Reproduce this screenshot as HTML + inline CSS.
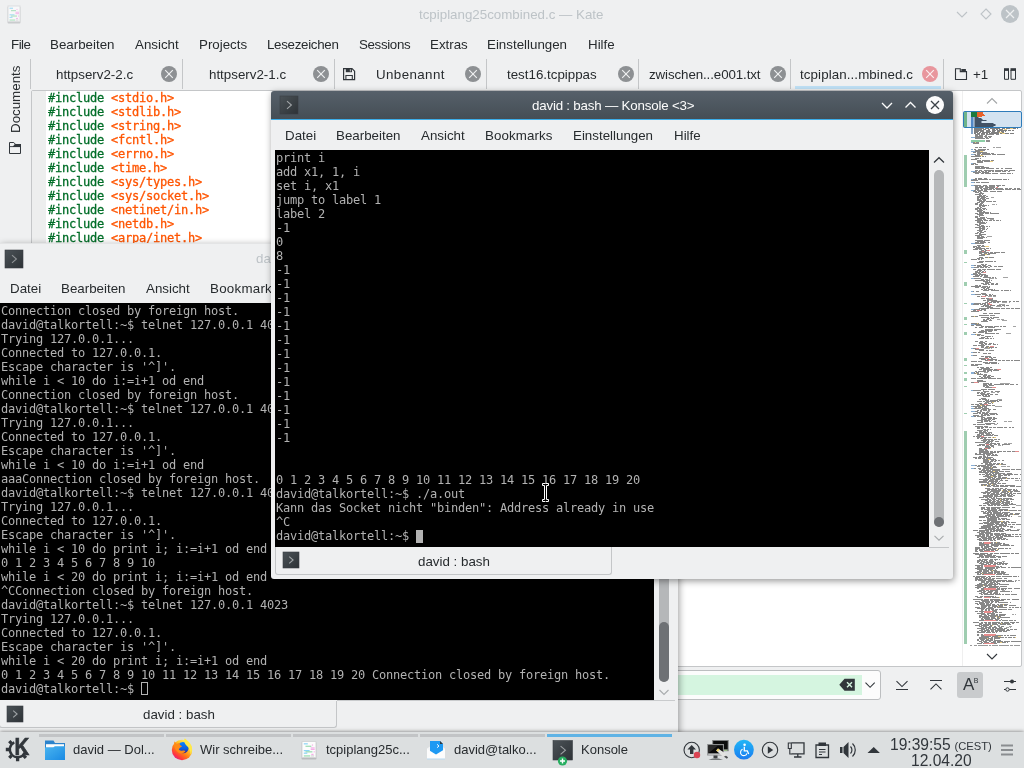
<!DOCTYPE html>
<html lang="de">
<head>
<meta charset="utf-8">
<title>tcpiplang25combined.c — Kate</title>
<style>
*{box-sizing:border-box;margin:0;padding:0}
html,body{width:1024px;height:768px;overflow:hidden;background:#eff0f1}
body{position:relative;font-family:"Liberation Sans",sans-serif;font-size:13.33px;color:#272b2e}
.abs{position:absolute}
.t,.mono{will-change:transform}
.t{position:absolute;white-space:nowrap;line-height:16px;height:16px}
.mono{font-family:"DejaVu Sans Mono","Liberation Mono",monospace;font-size:12px;letter-spacing:-0.2246px;line-height:14px}
.mono div{white-space:pre;height:14px;overflow:hidden}
.term{position:absolute;background:#000;color:#b2b2b2;overflow:hidden}
.code{position:absolute;color:#006e28;overflow:hidden;-webkit-text-stroke:.3px}
.code b{font-weight:normal;color:#ff5500}
svg{position:absolute;left:0;top:0;overflow:visible}
.tabsep{position:absolute;top:59px;width:1px;height:30px;background:#c4c6c8}
.win{position:absolute;background:#eff0f1}
#k1{left:0;top:243px;width:678px;height:492px;box-shadow:1px 2px 7px rgba(0,0,0,.4);border-top:1px solid #e3e4e5}
#k3{left:271px;top:91px;width:682px;height:488px;box-shadow:1px 2px 7px rgba(0,0,0,.42);border-radius:3px}
#k3 .tb{left:0;top:0;width:682px;height:29px;border-radius:3px 3px 0 0;background:linear-gradient(#56606a,#454e55);border-bottom:1px solid #3daee9}
#k3 .tb .t{color:#fcfcfc}
#panel{left:0;top:732px;width:1024px;height:36px;background:#dcdfe0;box-shadow:0 0 4px rgba(0,0,0,.55)}
.task{position:absolute;top:2px;height:3px;background:#c2c4c6}
.task.act{background:#60b3e5}
.pt{font-size:13px}

</style>
</head>
<body>
<div class="t" style="left:419px;top:7px;color:#bdc3c7">tcpiplang25combined.c — Kate</div>
<div class="t" style="left:11px;top:37px;letter-spacing:-0.5px">File</div>
<div class="t" style="left:50px;top:37px;letter-spacing:0px">Bearbeiten</div>
<div class="t" style="left:135px;top:37px;letter-spacing:0px">Ansicht</div>
<div class="t" style="left:199px;top:37px;letter-spacing:0px">Projects</div>
<div class="t" style="left:267px;top:37px;letter-spacing:-0.3px">Lesezeichen</div>
<div class="t" style="left:359px;top:37px;letter-spacing:-0.35px">Sessions</div>
<div class="t" style="left:430px;top:37px;letter-spacing:0px">Extras</div>
<div class="t" style="left:487px;top:37px;letter-spacing:0px">Einstellungen</div>
<div class="t" style="left:588px;top:37px;letter-spacing:0px">Hilfe</div>
<div class="tabsep" style="left:30px"></div>
<div class="tabsep" style="left:182px"></div>
<div class="tabsep" style="left:334px"></div>
<div class="tabsep" style="left:486px"></div>
<div class="tabsep" style="left:638px"></div>
<div class="tabsep" style="left:790px"></div>
<div class="tabsep" style="left:943px"></div>
<div class="t" style="left:56px;top:67px;letter-spacing:0px">httpserv2-2.c</div>
<div class="t" style="left:209px;top:67px;letter-spacing:0px">httpserv2-1.c</div>
<div class="t" style="left:376px;top:67px;letter-spacing:0.4px">Unbenannt</div>
<div class="t" style="left:507px;top:67px;letter-spacing:0px">test16.tcpippas</div>
<div class="t" style="left:649px;top:67px;letter-spacing:-0.1px">zwischen...e001.txt</div>
<div class="t" style="left:800px;top:67px;letter-spacing:0.1px">tcpiplan...mbined.c</div>
<div class="t" style="left:973px;top:67px;letter-spacing:0px">+1</div>
<div class="abs" style="left:795px;top:86px;width:146px;height:3px;background:#bfe0f5"></div>
<div class="t" style="left:8px;top:133px;transform:rotate(-90deg);transform-origin:0 0">Documents</div>
<div class="abs" style="left:31px;top:90px;width:991px;height:577px;background:#fff;border:1px solid #c4c6c8;border-radius:2px"></div>
<div class="abs" style="left:32px;top:91px;width:14px;height:155px;background:#edeeee"></div>
<div class="code mono" style="left:48px;top:91px;width:230px;height:154px">
<div>#include <b>&lt;stdio.h&gt;</b></div>
<div>#include <b>&lt;stdlib.h&gt;</b></div>
<div>#include <b>&lt;string.h&gt;</b></div>
<div>#include <b>&lt;fcntl.h&gt;</b></div>
<div>#include <b>&lt;errno.h&gt;</b></div>
<div>#include <b>&lt;time.h&gt;</b></div>
<div>#include <b>&lt;sys/types.h&gt;</b></div>
<div>#include <b>&lt;sys/socket.h&gt;</b></div>
<div>#include <b>&lt;netinet/in.h&gt;</b></div>
<div>#include <b>&lt;netdb.h&gt;</b></div>
<div>#include <b>&lt;arpa/inet.h&gt;</b></div>
</div>
<div class="abs" style="left:962px;top:91px;width:1px;height:575px;background:#efefef"></div>
<div class="abs" style="left:660px;top:670px;width:221px;height:30px;background:#fcfcfc;border:1px solid #bcbec0;border-radius:3px"></div>
<div class="abs" style="left:664px;top:675px;width:198px;height:20px;background:#d5f5e0"></div>
<div class="abs" style="left:957px;top:672px;width:26px;height:26px;background:#c9cbcd;border-radius:3px"></div>
<div class="t" style="left:963px;top:675px;font-size:17px;line-height:20px;height:20px;color:#31363b">A<span style="font-size:7px;position:relative;top:-7.5px;left:-.5px">B</span></div>
<svg width="1024" height="768" viewBox="0 0 1024 768">
<defs><linearGradient id="kg" x1="0" y1="0" x2="1" y2="1"><stop offset="0" stop-color="#4b5257"/><stop offset="1" stop-color="#2d3236"/></linearGradient></defs>
<g opacity="0.68"><rect x="7.5" y="6.5" width="13" height="17" rx="1" fill="#b9bbbd"/><rect x="8.0" y="6.0" width="12" height="15.5" fill="#fcfcfc" stroke="#d4d6d7" stroke-width="1"/><rect x="9.5" y="7.7" width="3.5" height="1.1" fill="#7fd0f5"/><rect x="11.0" y="10.1" width="5.0" height="1.1" fill="#8fd9a8"/><rect x="16.5" y="8.9" width="1.0" height="1.1" fill="#f4a6e6"/><rect x="15.5" y="11.7" width="3.5" height="1.1" fill="#f4a6e6"/><rect x="15.5" y="13.1" width="3.5" height="1.1" fill="#f4a6e6"/><rect x="9.5" y="14.3" width="5.0" height="1.1" fill="#7fd0f5"/><rect x="11.0" y="15.5" width="6.0" height="1.1" fill="#8fd9a8"/><rect x="18.0" y="15.5" width="1.0" height="1.1" fill="#f4a6e6"/><rect x="9.5" y="16.8" width="3.0" height="1.1" fill="#7fd0f5"/><rect x="16.0" y="17.9" width="2.0" height="1.1" fill="#f4a6e6"/><rect x="9.5" y="19.5" width="5.5" height="1.1" fill="#8fd9a8"/><rect x="15.5" y="19.5" width="3.0" height="1.1" fill="#d0d0d0"/></g>
<path d="M957 12l5 5l5-5" fill="none" stroke="#bdc3c7" stroke-width="1.1"/>
<path d="M986 9l5 5l-5 5l-5-5z" fill="none" stroke="#bdc3c7" stroke-width="1.1"/>
<circle cx="1010" cy="14" r="9" fill="#bdc3c7"/><path d="M1006 10l8 8M1014 10l-8 8" stroke="#eff0f1" stroke-width="1.2" fill="none"/>
<circle cx="169" cy="74" r="8" fill="#8d9093"/><path d="M165.2 70.2l7.6 7.6M172.8 70.2l-7.6 7.6" stroke="#eff0f1" stroke-width="1.15" fill="none"/>
<circle cx="321" cy="74" r="8" fill="#8d9093"/><path d="M317.2 70.2l7.6 7.6M324.8 70.2l-7.6 7.6" stroke="#eff0f1" stroke-width="1.15" fill="none"/>
<circle cx="473" cy="74" r="8" fill="#8d9093"/><path d="M469.2 70.2l7.6 7.6M476.8 70.2l-7.6 7.6" stroke="#eff0f1" stroke-width="1.15" fill="none"/>
<circle cx="626" cy="74" r="8" fill="#8d9093"/><path d="M622.2 70.2l7.6 7.6M629.8 70.2l-7.6 7.6" stroke="#eff0f1" stroke-width="1.15" fill="none"/>
<circle cx="778" cy="74" r="8" fill="#8d9093"/><path d="M774.2 70.2l7.6 7.6M781.8 70.2l-7.6 7.6" stroke="#eff0f1" stroke-width="1.15" fill="none"/>
<circle cx="930" cy="74" r="8" fill="#e8969d"/><path d="M926.2 70.2l7.6 7.6M933.8 70.2l-7.6 7.6" stroke="#fbeff0" stroke-width="1.15" fill="none"/>
<path d="M343.6 68.6h8.4l2.6 2.6v8.4h-11z" fill="none" stroke="#31363b" stroke-width="1.2"/><rect x="345.8" y="68.6" width="6.2" height="3.6" fill="#31363b"/><rect x="349.8" y="69.3" width="1.3" height="2.2" fill="#aeb1b3"/><path d="M345.9 79.4v-3.9h6.4v3.9" fill="none" stroke="#31363b" stroke-width="1.1"/>
<path d="M955.5 68.7h4.8v2.9h6.2v7.9h-11z" fill="none" stroke="#31363b" stroke-width="1.1"/><rect x="961.3" y="69" width="4.6" height="2.3" fill="#31363b"/>
<path d="M1004.5 70v9.300h4v-9.300M1011 70v9.300h4.500v-9.300" fill="none" stroke="#31363b" stroke-width="1"/><rect x="1004" y="68.200" width="5" height="2.700" fill="#31363b"/><rect x="1010.500" y="68.200" width="5.500" height="2.700" fill="#31363b"/>
<path d="M9.5 142.5h4.3l2.2 2.4h4.5v8.6h-11z" fill="none" stroke="#31363b" stroke-width="1"/><path d="M12.6 147l2.2-2.9h6.2v2.9z" fill="#31363b"/><path d="M9.5 146.6h11" stroke="#31363b" stroke-width=".9"/>
<rect x="963" y="111" width="59" height="17" fill="#d3e3f1"/>
<g fill="none" stroke-width="1" opacity=".6" style="filter:blur(.3px)">
<path d="M971 128.5h2M971 129.5h2M971 130.5h2M971 131.5h2M971 132.5h2M971 133.5h2" stroke="#3b6ea8"/>
<path d="M974 128.5h10M985 128.5h4M990 128.5h10M1002 128.5h3M1006 128.5h10M1017 128.5h1M974 129.5h8M983 129.5h3M988 129.5h2M992 129.5h3M996 129.5h2M999 129.5h4M974 130.5h10M986 130.5h4M992 130.5h4M997 130.5h10M1008 130.5h3M1012 130.5h2M974 131.5h5M980 131.5h4M986 131.5h5M992 131.5h3M997 131.5h3M1001 131.5h3M1005 131.5h1M974 132.5h4M979 132.5h2M982 132.5h8M991 132.5h8M1000 132.5h4M974 133.5h2M977 133.5h3M981 133.5h4M986 133.5h2M989 133.5h10M1000 133.5h3M1005 133.5h4M1010 133.5h4" stroke="#2a2a2a"/>
<path d="M1010 128.5h3M1004 129.5h3M999 132.5h3M1002 133.5h3M975 142.5h3M980 151.5h3M979 155.5h4M989 161.5h4M985 246.5h4M983 254.5h4M986 257.5h4M974 316.5h2M975 323.5h3M988 330.5h4M975 334.5h3M988 347.5h4M989 350.5h3M984 358.5h2M980 367.5h3M974 373.5h4M977 390.5h4M991 402.5h3M980 405.5h4M979 407.5h4M992 437.5h4M989 439.5h3M987 448.5h4M982 451.5h3M988 459.5h2M997 464.5h4M989 467.5h4M993 471.5h3M997 473.5h3M991 476.5h2M1006 478.5h3M995 479.5h3M989 483.5h2M992 484.5h3M983 485.5h4M1002 490.5h3M1007 491.5h4M989 496.5h4M999 499.5h2M1000 501.5h3M1001 503.5h3M1006 510.5h4M1012 514.5h2M992 515.5h3M990 517.5h3M1002 518.5h3M1001 521.5h3M992 527.5h2M981 532.5h2M994 538.5h2M995 542.5h2M996 543.5h2M987 544.5h2M997 549.5h2M980 551.5h2M988 554.5h4M987 556.5h3M991 559.5h2M978 565.5h3M990 566.5h2M992 570.5h2M981 573.5h2M1003 584.5h3M983 585.5h3M996 597.5h4M991 601.5h2M1002 604.5h3M997 606.5h3M999 609.5h2M996 616.5h2M997 617.5h3M996 620.5h2M999 623.5h4M990 625.5h3M1000 629.5h4M987 631.5h3M985 634.5h4M997 636.5h4M1014 637.5h2M986 638.5h2M1007 641.5h2M999 642.5h3M989 643.5h4" stroke="#e0b030"/>
<path d="M975 134.5h5M981 134.5h4M986 134.5h8M996 134.5h3M975 135.5h3M979 135.5h4M985 135.5h2M975 136.5h8M984 136.5h3M988 136.5h4M973 137.5h10M985 137.5h3M989 137.5h2M975 138.5h10M986 138.5h3M971 142.5h4M976 142.5h3M973 143.5h6M975 147.5h3M979 147.5h3M983 147.5h3M971 149.5h2M974 149.5h2M978 149.5h8M987 149.5h2M975 150.5h10M971 151.5h9M973 152.5h3M977 152.5h10M977 153.5h4M982 153.5h8M991 153.5h3M971 154.5h5M977 154.5h3M981 154.5h10M992 154.5h4M997 154.5h8M975 155.5h5M971 156.5h10M982 156.5h2M985 156.5h1M975 158.5h4M980 158.5h1M971 159.5h6M977 160.5h4M982 160.5h8M991 160.5h3M977 161.5h6M984 161.5h6M977 162.5h6M971 163.5h5M971 164.5h3M975 164.5h3M975 166.5h9M975 167.5h5M981 167.5h8M975 168.5h10M986 168.5h8M996 168.5h3M1001 168.5h2M1005 168.5h7M975 170.5h3M979 170.5h3M984 170.5h10M995 170.5h8M1004 170.5h4M1009 170.5h6M973 171.5h4M978 171.5h2M981 171.5h3M985 171.5h2M988 171.5h3M992 171.5h2M995 171.5h6M1002 171.5h4M1008 171.5h2M973 172.5h8M982 172.5h7M975 173.5h4M981 173.5h3M985 173.5h6M992 173.5h6M1000 173.5h6M1007 173.5h4M1012 173.5h1M975 178.5h2M978 178.5h4M984 178.5h3M973 179.5h4M978 179.5h10M989 179.5h2M992 179.5h10M1003 179.5h4M1008 179.5h1M971 180.5h7M973 182.5h2M976 182.5h4M981 182.5h8M973 185.5h8M983 185.5h4M989 185.5h6M996 185.5h5M1002 185.5h3M975 186.5h3M979 186.5h5M985 186.5h3M989 186.5h6M997 186.5h2M975 187.5h8M985 187.5h10M996 187.5h2M975 188.5h4M980 188.5h2M983 188.5h5M989 188.5h5M995 188.5h8M1005 188.5h3M1009 188.5h3M1014 188.5h2M1017 188.5h3M975 189.5h4M981 189.5h2M984 189.5h8M993 189.5h2M996 189.5h8M1005 189.5h6M1012 189.5h4M1017 189.5h4M973 190.5h3M977 190.5h6M984 190.5h3M973 191.5h4M978 191.5h3M983 191.5h5M990 191.5h6M997 191.5h5M975 192.5h4M980 192.5h2M979 193.5h5M975 194.5h6M982 194.5h1M979 195.5h3M983 195.5h3M977 196.5h8M986 196.5h2M977 197.5h3M981 197.5h5M977 198.5h2M980 198.5h5M986 198.5h3M977 199.5h4M982 199.5h4M977 200.5h5M983 200.5h3M979 201.5h6M986 201.5h6M993 201.5h3M977 202.5h3M981 202.5h3M975 203.5h3M980 203.5h3M975 204.5h3M979 204.5h3M983 204.5h1M979 205.5h8M988 205.5h1M979 206.5h2M982 206.5h3M977 207.5h2M980 207.5h2M975 208.5h6M982 208.5h4M975 209.5h3M979 209.5h3M983 209.5h2M986 209.5h1M977 210.5h6M977 211.5h5M983 211.5h2M979 212.5h10M990 212.5h1M975 213.5h3M979 213.5h5M985 213.5h4M990 213.5h9M977 214.5h6M979 215.5h5M975 216.5h3M979 216.5h1M975 217.5h3M980 217.5h5M986 217.5h1M977 218.5h8M987 218.5h7M977 219.5h5M983 219.5h3M975 220.5h8M984 220.5h4M989 220.5h3M993 220.5h2M996 220.5h3M1000 220.5h1M977 221.5h4M982 221.5h1M977 222.5h8M986 222.5h1M979 223.5h7M975 224.5h3M979 224.5h2M977 225.5h3M981 225.5h3M979 226.5h6M986 226.5h2M989 226.5h1M975 227.5h6M982 227.5h3M979 228.5h6M987 228.5h1M979 229.5h2M982 229.5h3M986 229.5h1M977 230.5h6M979 231.5h3M984 231.5h2M977 232.5h2M980 232.5h4M975 233.5h3M979 233.5h2M979 234.5h7M975 235.5h7M977 236.5h3M981 236.5h3M977 237.5h8M986 237.5h1M977 238.5h6M975 240.5h8M984 240.5h6M977 241.5h8M975 242.5h4M980 242.5h6M988 242.5h2M971 243.5h3M975 243.5h9M977 245.5h4M982 245.5h2M973 246.5h4M978 246.5h2M981 246.5h4M973 247.5h2M976 247.5h5M975 248.5h10M986 248.5h3M990 248.5h1M973 249.5h5M979 249.5h3M984 249.5h2M981 250.5h3M985 250.5h3M979 251.5h4M984 251.5h2M979 252.5h10M990 252.5h3M994 252.5h6M1001 252.5h4M979 253.5h3M984 253.5h3M988 253.5h8M981 254.5h4M987 254.5h3M979 255.5h6M979 257.5h4M985 257.5h3M989 257.5h5M977 258.5h3M981 258.5h3M971 259.5h6M978 259.5h2M981 259.5h1M979 261.5h5M985 261.5h8M994 261.5h2M977 262.5h6M981 264.5h3M985 264.5h2M973 265.5h3M977 265.5h4M982 265.5h4M988 265.5h3M977 266.5h5M983 266.5h5M990 266.5h2M994 266.5h3M998 266.5h5M973 267.5h6M980 267.5h4M985 267.5h2M988 267.5h2M973 269.5h3M978 269.5h3M982 269.5h4M987 269.5h8M996 269.5h5M977 270.5h5M984 270.5h1M975 271.5h3M979 271.5h2M982 271.5h2M985 271.5h1M975 272.5h5M981 272.5h3M973 273.5h4M978 273.5h3M973 274.5h5M979 274.5h7M975 275.5h5M981 275.5h2M984 275.5h4M973 276.5h6M980 276.5h2M984 276.5h4M983 277.5h8M992 277.5h2M995 277.5h1M973 278.5h8M981 279.5h3M985 279.5h3M989 279.5h1M975 280.5h10M986 280.5h4M991 280.5h1M983 281.5h5M989 281.5h1M985 282.5h6M981 283.5h3M985 283.5h4M991 283.5h3M996 283.5h2M983 284.5h4M988 284.5h2M991 284.5h3M995 284.5h3M975 285.5h3M979 285.5h2M971 286.5h10M982 286.5h6M989 286.5h1M975 287.5h4M981 287.5h5M987 287.5h3M983 288.5h2M986 288.5h3M981 289.5h2M984 289.5h3M988 289.5h5M994 289.5h1M983 290.5h6M991 290.5h8M1001 290.5h2M1004 290.5h5M1010 290.5h1M971 291.5h3M976 291.5h3M981 293.5h5M973 294.5h8M982 294.5h5M989 294.5h2M992 294.5h1M985 295.5h3M989 295.5h3M993 295.5h3M977 296.5h3M981 296.5h4M981 298.5h4M986 298.5h7M987 299.5h6M983 300.5h3M987 300.5h10M987 301.5h2M991 301.5h10M1002 301.5h5M1009 301.5h2M1013 301.5h2M1016 301.5h3M985 302.5h3M989 302.5h3M993 302.5h3M997 302.5h2M971 303.5h10M982 303.5h4M987 303.5h3M973 304.5h6M980 304.5h3M984 304.5h2M987 304.5h4M983 305.5h6M990 305.5h5M997 305.5h4M1002 305.5h3M1006 305.5h3M981 306.5h3M985 306.5h6M987 307.5h6M979 308.5h10M990 308.5h10M1001 308.5h4M1006 308.5h4M1011 308.5h3M1015 308.5h5M971 309.5h2M974 309.5h6M981 309.5h5M973 310.5h3M977 310.5h2M980 310.5h2M984 310.5h2M971 311.5h8M983 313.5h4M989 313.5h4M994 313.5h6M979 315.5h10M990 315.5h5M971 316.5h3M975 316.5h3M981 317.5h8M990 317.5h2M993 317.5h6M987 318.5h3M991 318.5h3M983 319.5h2M986 319.5h3M990 319.5h1M983 320.5h4M989 320.5h3M981 321.5h7M971 323.5h6M978 323.5h1M971 324.5h3M975 324.5h6M971 325.5h3M976 325.5h6M981 326.5h3M985 326.5h8M994 326.5h5M1000 326.5h2M1003 326.5h3M975 327.5h2M979 327.5h4M985 327.5h2M988 327.5h7M985 329.5h8M994 329.5h7M981 330.5h3M985 330.5h8M994 330.5h3M979 331.5h8M988 331.5h4M973 332.5h3M978 332.5h6M985 332.5h2M985 333.5h10M996 333.5h3M971 334.5h5M977 334.5h4M977 335.5h3M981 335.5h3M985 336.5h6M992 336.5h1M981 337.5h4M987 337.5h1M979 338.5h5M985 338.5h4M990 338.5h2M993 338.5h1M975 341.5h3M980 341.5h3M985 341.5h2M979 342.5h6M979 343.5h4M984 343.5h3M989 343.5h3M993 343.5h1M981 344.5h3M985 344.5h2M988 344.5h3M993 344.5h3M997 344.5h1M973 345.5h4M978 345.5h7M981 346.5h3M986 346.5h3M981 347.5h3M985 347.5h3M989 347.5h5M995 347.5h2M973 348.5h4M978 348.5h1M975 349.5h9M979 350.5h5M986 350.5h2M989 350.5h5M973 352.5h4M978 352.5h2M983 353.5h4M988 353.5h3M971 355.5h6M981 356.5h3M985 356.5h6M985 357.5h3M989 357.5h3M993 357.5h3M979 358.5h10M991 358.5h2M981 359.5h5M987 359.5h10M985 360.5h8M995 360.5h2M998 360.5h3M1002 360.5h3M1006 360.5h4M1011 360.5h2M1014 360.5h6M971 361.5h6M978 361.5h4M983 362.5h5M989 362.5h8M985 363.5h5M991 363.5h6M998 363.5h1M971 364.5h3M975 364.5h7M971 365.5h7M977 367.5h2M980 367.5h4M986 367.5h3M990 367.5h2M981 368.5h9M979 369.5h3M983 369.5h10M994 369.5h3M983 370.5h3M987 370.5h5M993 370.5h6M975 371.5h2M978 371.5h8M987 371.5h2M991 371.5h1M971 372.5h4M976 372.5h3M971 373.5h5M977 373.5h2M980 373.5h1M977 374.5h6M984 374.5h3M983 375.5h4M988 375.5h3M979 376.5h2M983 376.5h3M987 376.5h3M991 376.5h3M981 377.5h2M984 377.5h7M971 378.5h5M977 378.5h10M988 378.5h8M997 378.5h4M977 380.5h6M977 381.5h9M971 382.5h8M983 383.5h6M990 383.5h2M983 384.5h4M988 384.5h4M994 384.5h10M1005 384.5h4M1010 384.5h4M1016 384.5h2M983 385.5h5M989 385.5h5M983 386.5h2M986 386.5h3M985 387.5h8M981 389.5h6M988 389.5h7M971 390.5h10M983 390.5h1M983 391.5h6M991 391.5h2M995 391.5h5M977 392.5h3M981 392.5h2M984 392.5h2M977 393.5h2M980 393.5h5M987 393.5h3M981 394.5h8M990 394.5h3M995 394.5h3M977 395.5h4M982 395.5h2M985 395.5h2M988 395.5h2M983 396.5h7M981 398.5h5M979 399.5h2M982 399.5h5M988 399.5h1M985 400.5h4M990 400.5h8M999 400.5h3M977 401.5h5M983 401.5h2M986 401.5h10M997 401.5h2M985 402.5h4M991 402.5h1M979 403.5h3M984 403.5h3M988 403.5h3M992 403.5h1M971 404.5h3M975 404.5h4M980 404.5h4M985 404.5h1M977 405.5h3M982 405.5h3M986 405.5h5M992 405.5h3M971 406.5h10M982 406.5h5M975 407.5h2M978 407.5h5M984 407.5h3M973 408.5h8M982 408.5h7M981 409.5h6M988 409.5h3M993 409.5h3M977 410.5h2M980 410.5h2M983 410.5h4M988 410.5h2M971 411.5h3M975 411.5h3M980 411.5h2M977 412.5h4M982 412.5h3M986 412.5h3M973 413.5h5M979 413.5h2M982 413.5h6M989 413.5h8M981 414.5h2M984 414.5h5M990 414.5h5M996 414.5h2M973 415.5h6M981 415.5h5M987 415.5h3M971 416.5h5M977 416.5h6M981 417.5h4M987 417.5h5M993 417.5h2M981 418.5h2M984 418.5h8M993 418.5h4M981 419.5h6M988 419.5h3M992 419.5h3M977 420.5h6M984 420.5h6M991 420.5h1M981 421.5h2M984 421.5h4M989 421.5h2M993 421.5h3M977 422.5h6M985 423.5h10M997 423.5h1M973 424.5h3M977 424.5h8M986 424.5h5M975 426.5h8M984 426.5h4M977 427.5h3M981 427.5h3M985 427.5h3M989 427.5h3M993 427.5h3M997 427.5h6M1004 427.5h3M1009 427.5h2M1012 427.5h2M977 428.5h3M981 428.5h2M983 429.5h3M987 429.5h2M990 429.5h1M977 430.5h6M984 430.5h4M979 431.5h3M983 431.5h3M987 431.5h1M975 432.5h3M979 432.5h8M988 432.5h4M979 433.5h5M985 433.5h5M991 433.5h1M977 434.5h3M981 434.5h3M986 434.5h5M992 434.5h2M977 435.5h5M983 435.5h10M994 435.5h4M973 436.5h2M976 436.5h6M977 437.5h3M981 437.5h6M988 437.5h3M993 437.5h1M977 438.5h2M980 438.5h3M984 438.5h2M983 439.5h10M994 439.5h3M998 439.5h2M981 440.5h6M988 440.5h2M991 440.5h3M983 441.5h3M987 441.5h6M995 441.5h4M975 442.5h10M986 442.5h4M991 442.5h1M985 443.5h4M990 443.5h6M997 443.5h3M979 444.5h6M986 444.5h6M994 444.5h3M998 444.5h2M1002 444.5h8M977 445.5h4M982 445.5h3M986 445.5h3M990 445.5h4M985 446.5h5M991 446.5h3M985 447.5h6M993 447.5h1M979 448.5h3M984 448.5h6M979 449.5h8M979 450.5h5M985 450.5h3M979 451.5h10M990 451.5h3M994 451.5h2M997 451.5h5M1003 451.5h3M1007 451.5h4M1012 451.5h6M979 452.5h10M990 452.5h6M997 452.5h2M975 453.5h2M979 453.5h2M983 453.5h10M975 454.5h10M986 454.5h5M992 454.5h2M995 454.5h2M983 455.5h2M987 455.5h3M991 455.5h7M979 456.5h3M983 456.5h3M987 456.5h1M973 457.5h4M978 457.5h4M983 457.5h10M975 458.5h2M978 458.5h3M982 458.5h3M986 458.5h5M993 458.5h1M983 459.5h5M990 459.5h6M983 460.5h6M991 460.5h3M995 460.5h2M998 460.5h2M1002 460.5h2M983 461.5h6M990 461.5h3M994 461.5h2M983 462.5h8M981 463.5h2M985 463.5h3M989 463.5h3M993 463.5h3M997 463.5h3M1001 463.5h2M985 464.5h10M996 464.5h3M1001 464.5h5M973 465.5h4M978 465.5h8M987 465.5h6M977 466.5h3M981 466.5h8M990 466.5h2M993 466.5h3M983 467.5h8M992 467.5h5M973 468.5h3M978 468.5h3M983 468.5h10M979 469.5h2M982 469.5h3M986 469.5h3M990 469.5h10M1002 469.5h8M1011 469.5h4M1016 469.5h5M981 470.5h10M992 470.5h8M979 471.5h3M983 471.5h3M987 471.5h6M995 471.5h3M999 471.5h5M1005 471.5h5M979 472.5h10M990 472.5h9M985 473.5h3M989 473.5h2M992 473.5h2M995 473.5h10M1007 473.5h5M979 474.5h2M982 474.5h3M986 474.5h6M993 474.5h4M998 474.5h3M1003 474.5h10M1014 474.5h4M1020 474.5h1M985 475.5h4M990 475.5h6M998 475.5h5M1004 475.5h3M1008 475.5h2M983 476.5h8M993 476.5h4M998 476.5h3M987 477.5h6M994 477.5h2M998 477.5h3M1002 477.5h5M985 478.5h2M988 478.5h3M992 478.5h3M996 478.5h10M1007 478.5h3M1011 478.5h3M1015 478.5h3M1019 478.5h1M979 479.5h10M990 479.5h10M1001 479.5h1M983 480.5h5M989 480.5h5M995 480.5h3M1000 480.5h3M1005 480.5h3M979 481.5h8M988 481.5h10M999 481.5h1M979 482.5h10M991 482.5h3M995 482.5h2M998 482.5h1M987 483.5h2M990 483.5h6M997 483.5h4M1002 483.5h4M981 484.5h6M988 484.5h3M993 484.5h4M981 485.5h2M984 485.5h2M987 485.5h3M991 485.5h4M996 485.5h3M1000 485.5h4M1005 485.5h10M987 486.5h4M993 486.5h6M1000 486.5h8M1010 486.5h5M1016 486.5h5M985 488.5h5M992 488.5h2M995 488.5h4M1000 488.5h3M1005 488.5h2M987 489.5h10M998 489.5h3M1003 489.5h3M1007 489.5h5M1013 489.5h2M1016 489.5h1M987 490.5h3M991 490.5h10M1003 490.5h4M1008 490.5h3M1013 490.5h5M985 491.5h3M990 491.5h10M1002 491.5h6M1010 491.5h3M1014 491.5h6M981 492.5h10M993 492.5h6M1001 492.5h5M1007 492.5h2M1010 492.5h2M983 493.5h3M987 493.5h3M991 493.5h4M996 493.5h3M1000 493.5h2M1004 493.5h4M1009 493.5h3M1013 493.5h3M1017 493.5h4M987 494.5h2M990 494.5h10M1001 494.5h5M1007 494.5h3M1011 494.5h2M983 495.5h10M994 495.5h4M1000 495.5h6M1007 495.5h5M1013 495.5h2M983 496.5h10M994 496.5h8M1003 496.5h3M1008 496.5h5M979 497.5h5M985 497.5h3M989 497.5h3M993 497.5h2M996 497.5h1M987 498.5h2M991 498.5h4M996 498.5h6M1003 498.5h9M981 499.5h10M992 499.5h4M998 499.5h2M1001 499.5h4M1006 499.5h3M1010 499.5h4M985 500.5h3M989 500.5h3M993 500.5h2M996 500.5h3M1000 500.5h2M1003 500.5h5M987 501.5h4M992 501.5h4M997 501.5h3M1001 501.5h3M1006 501.5h4M1011 501.5h1M985 502.5h10M996 502.5h5M1002 502.5h8M983 503.5h6M990 503.5h10M1001 503.5h3M1005 503.5h5M1011 503.5h2M987 504.5h3M991 504.5h10M1003 504.5h5M1009 504.5h7M979 505.5h3M983 505.5h3M988 505.5h5M994 505.5h2M997 505.5h3M1001 505.5h8M981 507.5h4M986 507.5h4M991 507.5h10M1002 507.5h8M1012 507.5h3M981 508.5h4M987 508.5h3M991 508.5h5M997 508.5h3M981 509.5h2M984 509.5h6M991 509.5h6M999 509.5h9M987 510.5h10M998 510.5h5M1004 510.5h4M1009 510.5h8M1018 510.5h3M981 511.5h3M985 511.5h2M988 511.5h3M992 511.5h6M1000 511.5h1M983 512.5h3M987 512.5h5M993 512.5h8M1002 512.5h8M983 513.5h6M990 513.5h2M993 513.5h10M1004 513.5h4M1010 513.5h3M1015 513.5h5M987 514.5h8M996 514.5h6M1003 514.5h5M1009 514.5h4M1014 514.5h5M985 515.5h6M992 515.5h3M996 515.5h8M1005 515.5h5M979 516.5h8M988 516.5h8M997 516.5h10M1008 516.5h2M1011 516.5h1M979 517.5h6M986 517.5h3M990 517.5h9M987 518.5h10M998 518.5h2M1001 518.5h6M987 519.5h10M998 519.5h3M1002 519.5h3M1006 519.5h4M979 520.5h3M983 520.5h3M987 520.5h10M987 521.5h3M991 521.5h10M1003 521.5h2M1006 521.5h3M983 522.5h6M990 522.5h10M1001 522.5h6M1008 522.5h2M1011 522.5h5M979 523.5h4M984 523.5h10M995 523.5h4M1001 523.5h2M1004 523.5h3M987 524.5h8M996 524.5h8M1005 524.5h2M1008 524.5h3M1012 524.5h3M1016 524.5h5M983 525.5h10M995 525.5h2M999 525.5h8M981 526.5h10M992 526.5h10M1003 526.5h3M1007 526.5h2M1010 526.5h3M981 527.5h10M992 527.5h3M996 527.5h3M1001 527.5h1M979 528.5h8M988 528.5h8M997 528.5h2M1000 528.5h4M985 529.5h10M996 529.5h5M1002 529.5h3M1007 529.5h4M979 531.5h6M986 531.5h3M990 531.5h5M996 531.5h2M999 531.5h5M977 532.5h3M981 532.5h10M979 533.5h5M985 533.5h8M994 533.5h6M1001 533.5h5M979 534.5h6M986 534.5h3M990 534.5h3M994 534.5h10M1005 534.5h6M1012 534.5h2M1015 534.5h3M1019 534.5h2M975 535.5h6M982 535.5h3M986 535.5h3M990 535.5h3M995 535.5h6M1002 535.5h5M1008 535.5h3M977 536.5h8M986 536.5h5M993 536.5h2M996 536.5h3M1000 536.5h3M1004 536.5h10M1015 536.5h4M1020 536.5h1M977 537.5h2M981 537.5h6M988 537.5h6M995 537.5h8M979 538.5h2M982 538.5h10M993 538.5h3M997 538.5h5M1003 538.5h3M977 539.5h5M983 539.5h4M988 539.5h4M993 539.5h2M997 539.5h3M1001 539.5h4M1006 539.5h2M979 540.5h10M990 540.5h3M994 540.5h2M979 542.5h3M983 542.5h10M994 542.5h2M997 542.5h3M979 543.5h6M986 543.5h3M990 543.5h3M994 543.5h8M1003 543.5h2M979 544.5h10M991 544.5h10M1003 544.5h6M979 545.5h6M986 545.5h3M991 545.5h8M1000 545.5h10M1011 545.5h3M981 546.5h2M984 546.5h8M994 546.5h4M975 547.5h5M981 547.5h2M984 547.5h5M991 547.5h2M975 548.5h5M982 548.5h5M988 548.5h3M992 548.5h5M998 548.5h6M1005 548.5h3M1009 548.5h2M975 549.5h3M979 549.5h6M986 549.5h10M998 549.5h1M975 550.5h2M979 550.5h4M984 550.5h6M991 550.5h3M995 550.5h3M975 551.5h3M980 551.5h6M987 551.5h3M975 554.5h10M987 554.5h5M979 555.5h4M984 555.5h8M993 555.5h3M979 556.5h5M985 556.5h10M996 556.5h5M1002 556.5h5M977 557.5h3M981 557.5h3M985 557.5h4M990 557.5h6M998 557.5h3M979 559.5h2M982 559.5h6M990 559.5h3M994 559.5h4M999 559.5h1M977 560.5h6M984 560.5h3M989 560.5h4M995 560.5h1M977 561.5h3M981 561.5h4M986 561.5h2M989 561.5h5M977 562.5h2M980 562.5h2M983 562.5h10M994 562.5h2M997 562.5h5M1003 562.5h1M979 563.5h5M986 563.5h3M990 563.5h3M994 563.5h4M999 563.5h9M981 564.5h6M988 564.5h3M993 564.5h3M997 564.5h4M1002 564.5h2M1005 564.5h2M975 565.5h8M984 565.5h6M991 565.5h3M977 566.5h3M981 566.5h2M984 566.5h3M988 566.5h6M995 566.5h4M1000 566.5h2M977 567.5h6M985 567.5h10M996 567.5h4M1001 567.5h5M1008 567.5h2M1011 567.5h10M975 568.5h8M985 568.5h10M996 568.5h2M977 569.5h10M988 569.5h5M995 569.5h1M979 570.5h3M983 570.5h6M990 570.5h2M993 570.5h4M977 571.5h5M983 571.5h6M991 571.5h2M994 571.5h6M1001 571.5h3M975 572.5h6M982 572.5h5M988 572.5h5M994 572.5h6M1001 572.5h5M977 573.5h2M980 573.5h2M983 573.5h10M994 573.5h2M997 573.5h8M977 574.5h4M982 574.5h3M986 574.5h8M996 574.5h6M1003 574.5h6M975 577.5h5M981 577.5h4M986 577.5h2M989 577.5h2M975 578.5h3M979 578.5h3M983 578.5h4M988 578.5h3M992 578.5h3M996 578.5h6M1004 578.5h3M975 579.5h8M984 579.5h10M975 580.5h2M978 580.5h8M988 580.5h8M997 580.5h10M1008 580.5h4M981 581.5h4M986 581.5h6M993 581.5h8M1002 581.5h3M1006 581.5h8M1015 581.5h1M981 582.5h4M986 582.5h3M990 582.5h5M996 582.5h2M979 583.5h3M984 583.5h4M989 583.5h4M994 583.5h2M997 583.5h3M977 584.5h10M988 584.5h10M999 584.5h10M975 585.5h8M984 585.5h8M994 585.5h2M977 586.5h6M985 586.5h3M989 586.5h10M1000 586.5h7M975 587.5h6M983 587.5h3M988 587.5h10M999 587.5h1M977 588.5h2M981 588.5h8M991 588.5h5M997 588.5h3M1001 588.5h6M1008 588.5h4M1014 588.5h6M981 589.5h10M992 589.5h8M1001 589.5h3M1005 589.5h1M979 590.5h6M986 590.5h3M990 590.5h8M977 591.5h5M983 591.5h3M988 591.5h5M995 591.5h3M1000 591.5h10M1011 591.5h1M981 592.5h4M987 592.5h5M994 592.5h4M979 593.5h3M983 593.5h5M990 593.5h2M993 593.5h5M999 593.5h1M981 594.5h2M984 594.5h10M995 594.5h6M1002 594.5h2M1005 594.5h5M1011 594.5h6M975 596.5h3M980 596.5h3M984 596.5h10M995 596.5h1M977 597.5h5M984 597.5h2M988 597.5h3M992 597.5h7M981 600.5h8M990 600.5h3M994 600.5h10M975 601.5h5M982 601.5h8M991 601.5h3M995 601.5h4M979 602.5h5M985 602.5h5M991 602.5h2M995 602.5h2M998 602.5h10M1010 602.5h1M975 603.5h3M979 603.5h6M986 603.5h3M990 603.5h2M977 604.5h2M980 604.5h5M986 604.5h5M992 604.5h3M997 604.5h2M1000 604.5h3M1004 604.5h4M981 605.5h10M992 605.5h5M998 605.5h5M1004 605.5h3M1009 605.5h7M981 606.5h6M988 606.5h2M992 606.5h6M999 606.5h4M975 607.5h5M981 607.5h5M988 607.5h5M994 607.5h2M997 607.5h10M1009 607.5h2M1012 607.5h2M1015 607.5h4M1020 607.5h1M977 608.5h8M986 608.5h8M981 609.5h3M985 609.5h2M988 609.5h2M991 609.5h3M995 609.5h3M999 609.5h8M1008 609.5h4M981 610.5h2M985 610.5h2M988 610.5h2M992 610.5h5M975 611.5h3M979 611.5h6M986 611.5h3M991 611.5h6M981 612.5h2M984 612.5h3M988 612.5h3M992 612.5h2M995 612.5h3M999 612.5h3M977 613.5h8M987 613.5h8M981 614.5h5M987 614.5h2M991 614.5h4M996 614.5h2M999 614.5h7M979 615.5h3M984 615.5h3M988 615.5h10M999 615.5h6M979 616.5h10M990 616.5h6M997 616.5h4M979 617.5h2M982 617.5h8M991 617.5h4M997 617.5h2M1000 617.5h10M981 618.5h2M984 618.5h6M991 618.5h5M997 618.5h3M981 619.5h3M985 619.5h8M995 619.5h4M1001 619.5h1M979 620.5h10M990 620.5h8M999 620.5h2M1002 620.5h6M1009 620.5h4M1014 620.5h2M979 623.5h4M985 623.5h2M988 623.5h3M992 623.5h5M998 623.5h3M1002 623.5h8M1012 623.5h2M979 624.5h3M983 624.5h8M992 624.5h6M1000 624.5h6M1007 624.5h4M975 625.5h5M981 625.5h8M990 625.5h2M979 626.5h3M983 626.5h4M989 626.5h3M994 626.5h2M998 626.5h2M1001 626.5h3M981 627.5h3M985 627.5h6M992 627.5h5M999 627.5h3M977 628.5h10M988 628.5h3M992 628.5h2M995 628.5h8M1004 628.5h3M981 629.5h4M986 629.5h3M990 629.5h6M997 629.5h8M1007 629.5h2M1010 629.5h3M1014 629.5h3M979 630.5h4M984 630.5h6M991 630.5h3M995 630.5h10M1006 630.5h4M977 631.5h2M981 631.5h5M987 631.5h3M991 631.5h3M995 631.5h3M999 631.5h3M1003 631.5h4M977 632.5h8M986 632.5h5M992 632.5h3M996 632.5h1M977 634.5h2M981 634.5h2M984 634.5h3M988 634.5h3M992 634.5h1M977 635.5h2M981 635.5h6M988 635.5h4M993 635.5h10M1004 635.5h2M1007 635.5h2M1010 635.5h6M981 636.5h10M992 636.5h6M979 637.5h10M991 637.5h2M994 637.5h10M1005 637.5h2M1008 637.5h4M1013 637.5h2M979 638.5h8M988 638.5h5M994 638.5h6M977 639.5h2M980 639.5h5M986 639.5h3M990 639.5h3M994 639.5h1M977 640.5h2M981 640.5h3M985 640.5h8M994 640.5h7M979 641.5h3M983 641.5h4M989 641.5h2M993 641.5h3M997 641.5h6M1004 641.5h6M1011 641.5h10M981 642.5h2M984 642.5h5M991 642.5h5M997 642.5h3M1002 642.5h4M1007 642.5h1M977 643.5h5M983 643.5h2M986 643.5h2M989 643.5h4M994 643.5h3" stroke="#3a3a3a"/>
<path d="M971 137.5h4M971 142.5h2M971 149.5h2M971 151.5h4M971 154.5h3M971 163.5h2M971 171.5h4M971 179.5h2M971 182.5h3M971 185.5h3M971 190.5h3M971 243.5h4M971 265.5h3M971 267.5h3M971 274.5h2M971 278.5h3M971 291.5h2M971 294.5h4M971 303.5h3M971 304.5h2M971 309.5h3M971 324.5h4M971 334.5h4M971 348.5h2M971 352.5h2M971 355.5h2M971 372.5h3M971 373.5h3M971 390.5h2M971 406.5h2M971 408.5h3M971 411.5h4M971 416.5h3M971 465.5h4M971 468.5h3" stroke="#3b78b8"/>
<path d="M971 140.5h14M971 141.5h14" stroke="#3fae6a"/>
<path d="M986 140.5h4M986 141.5h4" stroke="#444"/>
<path d="M993 147.5h2M996 147.5h5M991 197.5h3M992 204.5h3M996 204.5h1M990 219.5h4M987 236.5h5M1003 277.5h5M989 278.5h5M995 278.5h2M988 296.5h4M993 296.5h3M1002 302.5h5M1009 302.5h1M999 304.5h6M996 306.5h6M1004 306.5h1M997 319.5h3M1001 319.5h3M1002 320.5h5M1013 326.5h3M1006 333.5h5M984 348.5h6M991 348.5h1M984 372.5h4M1000 383.5h10M991 392.5h4M997 392.5h2M997 399.5h5M995 406.5h7M987 411.5h3M1004 421.5h3M1008 421.5h4M994 424.5h3M1004 443.5h3M1008 443.5h4M998 445.5h3M1002 445.5h1M1001 466.5h5M1007 466.5h3M1015 480.5h4M1020 480.5h1M1016 505.5h5M1018 516.5h3M1010 527.5h3M1014 527.5h1M1017 529.5h3M1002 561.5h3M1015 580.5h2M1018 580.5h2M1002 590.5h3M1012 614.5h2M1015 614.5h1M997 625.5h3M1009 626.5h3M1006 627.5h3M1010 627.5h1" stroke="#666"/>
<path d="M996 187.5h2M987 250.5h3M982 251.5h2M983 272.5h3M982 296.5h4M989 298.5h3M988 303.5h2M989 304.5h3M977 310.5h3M990 346.5h4M976 348.5h3M985 358.5h4M988 360.5h2M997 369.5h4M974 382.5h4M992 387.5h4M984 404.5h4M981 436.5h3M986 444.5h3M985 448.5h3M1015 451.5h4" stroke="#d04040"/>
<path d="M973 530.5h5M979 530.5h10M990 530.5h2M993 530.5h10M1005 530.5h4M1010 530.5h9M973 553.5h6M980 553.5h8M990 553.5h3M994 553.5h5M1000 553.5h10M1011 553.5h3M1015 553.5h4M973 576.5h2M976 576.5h10M988 576.5h2M991 576.5h4M996 576.5h5M1002 576.5h10M1013 576.5h4M1018 576.5h1M973 599.5h10M984 599.5h5M990 599.5h10M1001 599.5h5M1007 599.5h3M1012 599.5h7M973 622.5h6M981 622.5h2M984 622.5h3M988 622.5h3M992 622.5h8M1001 622.5h2M1004 622.5h5M1010 622.5h5M1016 622.5h3" stroke="#333"/>
<path d="M984 542.5h7M984 543.5h6M984 551.5h11M984 565.5h12M984 566.5h11M984 574.5h11M984 588.5h12M984 589.5h12M984 597.5h6M984 611.5h9M984 612.5h7M984 620.5h12M984 634.5h12M984 635.5h11M984 643.5h10" stroke="#d84040"/>
<path d="M970 645.5h2M974 645.5h3M978 645.5h10M989 645.5h2M992 645.5h6M999 645.5h10M1010 645.5h3M1014 645.5h6" stroke="#555"/>
</g>
<rect x="971" y="112" width="6" height="1" fill="#1c7a3e"/><rect x="977" y="112" width="6" height="1" fill="#e8622a"/><rect x="971" y="113" width="6" height="1" fill="#1c7a3e"/><rect x="977" y="113" width="6" height="1" fill="#e8622a"/><rect x="971" y="114" width="6" height="1" fill="#1c7a3e"/><rect x="977" y="114" width="7" height="1" fill="#e8622a"/><rect x="971" y="115" width="6" height="1" fill="#1c7a3e"/><rect x="977" y="115" width="8" height="1" fill="#e8622a"/><rect x="971" y="116" width="6" height="1" fill="#1c7a3e"/><rect x="977" y="116" width="5" height="1" fill="#e8622a"/><rect x="971" y="117" width="2.5" height="11" fill="#3b78c0" opacity=".85"/><rect x="974.5" y="117" width="4" height="1" fill="#1d2d44" opacity=".8"/><rect x="974.5" y="118" width="7" height="1" fill="#1d2d44" opacity=".8"/><rect x="974.5" y="119" width="8" height="1" fill="#1d2d44" opacity=".8"/><rect x="974.5" y="120" width="12" height="1" fill="#1d2d44" opacity=".8"/><rect x="974.5" y="121" width="7" height="1" fill="#1d2d44" opacity=".8"/><rect x="974.5" y="122" width="7" height="1" fill="#1d2d44" opacity=".8"/><rect x="974.5" y="123" width="19" height="1" fill="#1d2d44" opacity=".8"/><rect x="974.5" y="124" width="21" height="1" fill="#1d2d44" opacity=".8"/><rect x="974.5" y="125" width="21" height="1" fill="#1d2d44" opacity=".8"/><rect x="974.5" y="126" width="19" height="1" fill="#1d2d44" opacity=".8"/><rect x="974.5" y="127" width="16" height="1" fill="#1d2d44" opacity=".8"/>
<rect x="963.5" y="111.5" width="58" height="16" rx="1.5" fill="none" stroke="#2e7cba" stroke-width="1"/>
<g fill="#9fcdb0">
<rect x="964" y="112" width="3" height="15" fill="#6fb48a"/>
<rect x="964" y="155" width="3" height="32"/>
<rect x="964" y="250" width="3" height="4"/>
<rect x="964" y="262" width="3" height="1"/>
<rect x="964" y="282" width="3" height="4"/>
<rect x="964" y="303" width="3" height="1"/>
<rect x="964" y="317" width="3" height="3"/>
<rect x="964" y="324" width="3" height="1"/>
<rect x="964" y="332" width="3" height="3"/>
<rect x="964" y="358" width="3" height="3"/>
<rect x="964" y="365" width="3" height="1"/>
<rect x="964" y="372" width="3" height="2"/>
<rect x="964" y="378" width="3" height="3"/>
<rect x="964" y="386" width="3" height="1"/>
<rect x="964" y="413" width="3" height="1"/>
<rect x="964" y="431" width="3" height="213"/>
</g>
<path d="M987 103.5l5-5l5 5" fill="none" stroke="#a3a6a8" stroke-width="1.1"/>
<path d="M987 654l5 5l5-5" fill="none" stroke="#31363b" stroke-width="1.1"/>
<path d="M839.3 684.7l5.2-6h10.3v12h-10.3z" fill="#31363b"/><path d="M847 682.2l5 5M852 682.2l-5 5" stroke="#d5f5e0" stroke-width="1.4"/>
<path d="M865.5 682.7l4.6 4.6l4.6-4.6" fill="none" stroke="#31363b" stroke-width="1.1"/>
<path d="M896.5 681.2l5.5 5.4l5.5-5.4M896 689.5h12" fill="none" stroke="#31363b" stroke-width="1.1"/>
<path d="M930 680.5h12M930.5 689.3l5.5-5.4l5.5 5.4" fill="none" stroke="#31363b" stroke-width="1.1"/>
<path d="M1004 681.5h12M1004 689.5h12" stroke="#31363b" stroke-width="1.1"/><circle cx="1012" cy="681.5" r="2" fill="#31363b"/><circle cx="1007.5" cy="689.5" r="1.7" fill="#eff0f1" stroke="#31363b" stroke-width="1"/>
</svg>
<div id="k1" class="win">
<div class="t" style="left:256px;top:7px;color:#bdc3c7">david : bash — Konsole</div>
<div class="t" style="left:10px;top:37px;letter-spacing:0px">Datei</div>
<div class="t" style="left:61px;top:37px;letter-spacing:0px">Bearbeiten</div>
<div class="t" style="left:146px;top:37px;letter-spacing:0px">Ansicht</div>
<div class="t" style="left:210px;top:37px;letter-spacing:0.25px">Bookmarks</div>
<div class="term mono" style="left:0;top:59px;width:654px;height:397px;padding:1px 0 0 1px">
<div>Connection closed by foreign host.</div>
<div>david@talkortell:~$ telnet 127.0.0.1 4023</div>
<div>Trying 127.0.0.1...</div>
<div>Connected to 127.0.0.1.</div>
<div>Escape character is '^]'.</div>
<div>while i &lt; 10 do i:=i+1 od end</div>
<div>Connection closed by foreign host.</div>
<div>david@talkortell:~$ telnet 127.0.0.1 4023</div>
<div>Trying 127.0.0.1...</div>
<div>Connected to 127.0.0.1.</div>
<div>Escape character is '^]'.</div>
<div>while i &lt; 10 do i:=i+1 od end</div>
<div>aaaConnection closed by foreign host.</div>
<div>david@talkortell:~$ telnet 127.0.0.1 4023</div>
<div>Trying 127.0.0.1...</div>
<div>Connected to 127.0.0.1.</div>
<div>Escape character is '^]'.</div>
<div>while i &lt; 10 do print i; i:=i+1 od end</div>
<div>0 1 2 3 4 5 6 7 8 9 10</div>
<div>while i &lt; 20 do print i; i:=i+1 od end</div>
<div>^CConnection closed by foreign host.</div>
<div>david@talkortell:~$ telnet 127.0.0.1 4023</div>
<div>Trying 127.0.0.1...</div>
<div>Connected to 127.0.0.1.</div>
<div>Escape character is '^]'.</div>
<div>while i &lt; 20 do print i; i:=i+1 od end</div>
<div>0 1 2 3 4 5 6 7 8 9 10 11 12 13 14 15 16 17 18 19 20 Connection closed by foreign host.</div>
<div>david@talkortell:~$ </div>
</div>
<div class="abs" style="left:141px;top:438px;width:7px;height:13px;border:1px solid #b2b2b2"></div>
<div class="abs" style="left:-1px;top:457px;width:338px;height:27px;border:1px solid #c4c6c8;border-top:none;border-radius:0 0 3px 3px"></div>
<div class="abs" style="left:337px;top:456px;width:338px;height:1px;background:#c9cbcd"></div>
<div class="t" style="left:143px;top:463px">david : bash</div>
<svg width="678" height="488" viewBox="0 0 678 488">
<rect x="5" y="6" width="18" height="18" fill="url(#kg)" stroke="#3a3f44" stroke-width=".6"/><path d="M12.0 11.2l4.4 3.8l-4.4 3.8" fill="none" stroke="#8f9396" stroke-width="1.1"/>
<rect x="7" y="462" width="16" height="16" fill="url(#kg)" stroke="#3a3f44" stroke-width=".6"/><path d="M13.2 466.6l3.9 3.4l-3.9 3.4" fill="none" stroke="#a0a4a7" stroke-width="1.1"/>
<rect x="659" y="60" width="10" height="378" rx="5" fill="#b5b7b9"/><rect x="659" y="378" width="10" height="60" rx="5" fill="#6e7175"/>
<path d="M659.5 446l4.5 4.5l4.5-4.5" fill="none" stroke="#a8abad" stroke-width="1.1"/>
</svg>
</div>
<div id="k3" class="win">
<div class="abs tb"><div class="t" style="left:260.5px;top:7px;letter-spacing:-.2px">david : bash — Konsole &lt;3&gt;</div></div>
<div class="t" style="left:14px;top:37px;letter-spacing:0px">Datei</div>
<div class="t" style="left:65px;top:37px;letter-spacing:0px">Bearbeiten</div>
<div class="t" style="left:150px;top:37px;letter-spacing:0px">Ansicht</div>
<div class="t" style="left:214px;top:37px;letter-spacing:0.1px">Bookmarks</div>
<div class="t" style="left:302px;top:37px;letter-spacing:0px">Einstellungen</div>
<div class="t" style="left:403px;top:37px;letter-spacing:0px">Hilfe</div>
<div class="term mono" style="left:4px;top:59px;width:654px;height:397px;padding:1px 0 0 1px">
<div>print i</div>
<div>add x1, 1, i</div>
<div>set i, x1</div>
<div>jump to label 1</div>
<div>label 2</div>
<div>-1</div>
<div>0</div>
<div>8</div>
<div>-1</div>
<div>-1</div>
<div>-1</div>
<div>-1</div>
<div>-1</div>
<div>-1</div>
<div>-1</div>
<div>-1</div>
<div>-1</div>
<div>-1</div>
<div>-1</div>
<div>-1</div>
<div>-1</div>
<div> </div>
<div> </div>
<div>0 1 2 3 4 5 6 7 8 9 10 11 12 13 14 15 16 17 18 19 20</div>
<div>david@talkortell:~$ ./a.out</div>
<div>Kann das Socket nicht "binden": Address already in use</div>
<div>^C</div>
<div>david@talkortell:~$ </div>
</div>
<div class="abs" style="left:145px;top:439px;width:7px;height:13px;background:#b2b2b2"></div>
<div class="abs" style="left:658px;top:456px;width:20px;height:1px;background:#c4c6c8"></div>
<div class="abs" style="left:4px;top:456px;width:337px;height:28px;border:1px solid #c4c6c8;border-top:none;border-radius:0 0 3px 3px"></div>
<div class="t" style="left:147px;top:463px">david : bash</div>
<svg width="682" height="488" viewBox="0 0 682 488">
<rect x="9" y="5" width="18" height="18" fill="url(#kg)" stroke="#3a3f44" stroke-width=".6"/><path d="M16.0 10.2l4.4 3.8l-4.4 3.8" fill="none" stroke="#a0a4a7" stroke-width="1.1"/>
<rect x="12" y="461" width="16" height="16" fill="url(#kg)" stroke="#3a3f44" stroke-width=".6"/><path d="M18.2 465.6l3.9 3.4l-3.9 3.4" fill="none" stroke="#a0a4a7" stroke-width="1.1"/>
<path d="M611 12l5 5l5-5M634.5 16.5l5-5l5 5" fill="none" stroke="#fcfcfc" stroke-width="1.3"/>
<circle cx="664" cy="14" r="9" fill="#fcfcfc"/><path d="M660 10l8 8M668 10l-8 8" stroke="#3b4248" stroke-width="1.3" fill="none"/>
<path d="M663 71.5l5-4.8l5 4.8" fill="none" stroke="#31363b" stroke-width="1.2"/>
<rect x="663" y="79" width="10" height="357" rx="5" fill="#b5b7b9"/><circle cx="668" cy="431" r="5" fill="#6e7175"/>
<path d="M663.5 444.8l4.5 4.4l4.5-4.4" fill="none" stroke="#a8abad" stroke-width="1.1"/>
<path d="M271.500 392.500h2.500l.5.5l.5-.5h2.500v2h-2v14h2v2h-2.500l-.5-.5l-.5.5h-2.500v-2h2v-14h-2z" fill="#000" stroke="#fff" stroke-width="1"/>
</svg>
</div>
<div id="panel" class="abs">
<div class="task" style="left:39px;width:125px"></div>
<div class="task" style="left:166px;width:125px"></div>
<div class="task" style="left:293px;width:125px"></div>
<div class="task" style="left:420px;width:125px"></div>
<div class="task act" style="left:547px;width:125px"></div>
<div class="t pt" style="left:72.5px;top:10px">david — Dol...</div>
<div class="t pt" style="left:199.5px;top:10px">Wir schreibe...</div>
<div class="t pt" style="left:326px;top:10px">tcpiplang25c...</div>
<div class="t pt" style="left:453.5px;top:10px">david@talko...</div>
<div class="t pt" style="left:580.5px;top:10px">Konsole</div>
<div class="t" style="left:890px;top:4.5px;font-size:15.6px;color:#31363b">19:39:55 <span style="font-size:11.2px;position:relative;top:-.5px;left:-.5px">(CEST)</span></div>
<div class="t" style="left:910.5px;top:20.5px;font-size:15.6px;color:#31363b">12.04.20</div>
<svg width="1024" height="36" viewBox="0 732 1024 36">
<g><path d="M24.67 752.80A7.8 7.8 0 1 1 14.30 742.43" fill="none" stroke="#31363b" stroke-width="2.4"/><path d="M23.68 755.58L25.94 757.84M17.60 758.10L17.60 761.30M11.52 755.58L9.26 757.84M9.00 749.50L5.80 749.50M11.52 743.42L9.26 741.16" stroke="#31363b" stroke-width="3.3" fill="none"/><text transform="translate(14.4 754.5) scale(.86 1)" font-family="Liberation Sans,sans-serif" font-weight="bold" font-size="23.8" fill="#31363b" stroke="#31363b" stroke-width=".7">K</text></g>
<defs><linearGradient id="fold" x1="0" y1="0" x2="1" y2="1"><stop offset="0" stop-color="#4ab5f0"/><stop offset="1" stop-color="#1a8ae3"/></linearGradient></defs>
<path d="M45 740.500h8.500l1.500 2.500h10v17h-20z" fill="#2c83cc"/><rect x="46" y="744.200" width="18" height="3.400" fill="#fcfcfc"/><path d="M45 747.600h8.300l1.500-1.400h10.200v13.800h-20z" fill="url(#fold)"/>
<defs><linearGradient id="ff" x1=".85" y1=".1" x2=".2" y2=".95"><stop offset="0" stop-color="#fff36b"/><stop offset=".3" stop-color="#ffc72a"/><stop offset=".6" stop-color="#ff7a16"/><stop offset=".85" stop-color="#ff3340"/><stop offset="1" stop-color="#e0208a"/></linearGradient><linearGradient id="fg" x1=".5" y1="0" x2=".5" y2="1"><stop offset="0" stop-color="#0a84ff"/><stop offset=".6" stop-color="#0d5fe0"/><stop offset="1" stop-color="#3a1d8a"/></linearGradient></defs>
<circle cx="182" cy="750" r="10.2" fill="url(#ff)"/><circle cx="183" cy="747.6" r="5.7" fill="url(#fg)"/><path d="M174.3 741.3l2.300 2.700l3.100-1.300l.2 2.300l2.300 1.300l-2.200 1.400l-1.200 1.600c.8 1.700 2.400 1.500 4.200 1.200c1.200-.2 2-.1 2.400.7c-1.300 2.300-4.600 2.900-7.100 1.200c-2.300-1.600-3.700-4-4-6.600z" fill="#ff8a16"/><path d="M184.2 739.300c.3-1 1-1 1.500-.3c1.800 1.700 4.800 4 5.900 7.300c1 3.300.3 6-1.200 8.400c.4-3.800-1.200-6.400-3.200-8.400c-1.700-1.700-3.300-3.600-3-7z" fill="#ffe94a"/>
<g opacity="1"><rect x="301.5" y="742" width="15" height="17.5" rx="1" fill="#b9bbbd"/><rect x="302.0" y="741.5" width="14" height="16.0" fill="#fcfcfc" stroke="#d4d6d7" stroke-width="1"/><rect x="303.8" y="743.3" width="4.0" height="1.1" fill="#7fd0f5"/><rect x="305.5" y="745.7" width="5.8" height="1.1" fill="#8fd9a8"/><rect x="311.9" y="744.5" width="1.2" height="1.1" fill="#f4a6e6"/><rect x="310.7" y="747.4" width="4.0" height="1.1" fill="#f4a6e6"/><rect x="310.7" y="748.8" width="4.0" height="1.1" fill="#f4a6e6"/><rect x="303.8" y="750.1" width="5.8" height="1.1" fill="#7fd0f5"/><rect x="305.5" y="751.3" width="6.9" height="1.1" fill="#8fd9a8"/><rect x="313.6" y="751.3" width="1.2" height="1.1" fill="#f4a6e6"/><rect x="303.8" y="752.6" width="3.5" height="1.1" fill="#7fd0f5"/><rect x="311.3" y="753.8" width="2.3" height="1.1" fill="#f4a6e6"/><rect x="303.8" y="755.4" width="6.3" height="1.1" fill="#8fd9a8"/><rect x="310.7" y="755.4" width="3.5" height="1.1" fill="#d0d0d0"/></g>
<path d="M427 748.5l9-6l9 6v10.500h-18z" fill="#f3f4f5"/><path d="M430 741h10l3 3v12h-13z" fill="#1d99f3"/><path d="M440 741l3 3h-3z" fill="#31363b"/><path d="M437 744.300l2 1.700l-2 1.700" stroke="#eaf6ff" fill="none" stroke-width="1"/><path d="M427 749l9 5.500l9-5.500v10h-18z" fill="#fcfcfc"/><path d="M427 759h18" stroke="#b8d9f0" stroke-width="1"/>
<rect x="553" y="740.5" width="19.5" height="19.5" fill="url(#kg)" stroke="#3a3f44" stroke-width=".6"/><path d="M560.6 746.1l4.8 4.1l-4.8 4.1" fill="none" stroke="#9da1a4" stroke-width="1.1"/>
<circle cx="562.500" cy="761" r="4.600" fill="#27ae60"/><path d="M560 761h5M562.500 758.500v5" stroke="#fff" stroke-width="1.400"/>
<circle cx="691.700" cy="750" r="7.700" fill="none" stroke="#31363b" stroke-width="1.100"/><path d="M691.700 745l4.300 4.500h-2.600v4.500h-3.400v-4.500h-2.600z" fill="#31363b"/><circle cx="697" cy="755" r="3.200" fill="#da4453"/>
<rect x="712.200" y="740" width="16.500" height="11.200" fill="#7d7f80"/><rect x="713.200" y="741" width="14.500" height="8.300" fill="#0c0c0c"/><rect x="723.800" y="749.800" width="3.500" height="1" fill="#a8d08a"/><rect x="707.200" y="744" width="16.800" height="11.500" fill="#8b8d8e"/><rect x="708.300" y="745.200" width="14.600" height="8" fill="#0a0a0a"/><path d="M708.300 753.200v-8h10z" fill="#2a2a2a"/><rect x="708.300" y="753.800" width="14.600" height="1" fill="#c9caca"/><rect x="713.500" y="755.500" width="4" height="2.500" fill="#3d3f40"/><path d="M708.500 759.700q7-3 14.500 0z" fill="#55585a"/><path d="M724 755.500l3.500 2.500" stroke="#4a4c4e" stroke-width="2"/><path d="M716.200 750.600l1.800-2l7.200 4.600l.8 2.600l-2.800 1.200z" fill="#e4e4e2"/><path d="M716.200 750.600l1.800-2l1.600 1l-1.800 2.100z" fill="#f0d46a"/>
<defs><linearGradient id="acc" x1="0" y1="0" x2="0" y2="1"><stop offset="0" stop-color="#21b6f6"/><stop offset="1" stop-color="#1a7cf0"/></linearGradient></defs>
<circle cx="743.900" cy="749.700" r="9.900" fill="url(#acc)"/><circle cx="744.600" cy="744.800" r="1.300" fill="#fff"/><path d="M744.300 746.800v4h3l1.400 3.200" fill="none" stroke="#fff" stroke-width="1.300"/><path d="M742.600 749.300a3.300 3.300 0 1 0 4.400 4" fill="none" stroke="#fff" stroke-width="1.100"/>
<circle cx="770" cy="750" r="7.700" fill="none" stroke="#31363b" stroke-width="1.100"/><path d="M767.800 746.300l5.400 3.700l-5.400 3.700z" fill="#31363b"/>
<path d="M791.500 742.800h12.500v11h-12.500M794 757h7.500M797.800 754v3" fill="none" stroke="#31363b" stroke-width="1.300"/><path d="M788.300 743v5.500h3v-5.500zM789.800 748.500v5.500h2" fill="none" stroke="#31363b" stroke-width="1.100"/>
<path d="M816 745h12.500v12.500h-12.500z" fill="none" stroke="#31363b" stroke-width="1.300"/><rect x="818.500" y="742.500" width="7.500" height="3.500" fill="#31363b"/><path d="M819 749.500h6.500M819 752h6.500M819 754.500h3" stroke="#31363b" stroke-width="1.100"/>
<path d="M840 747h2.500v6h-2.500zM843.500 747l5-5v16l-5-5z" fill="#31363b"/><path d="M850.500 746.500a5 5 0 0 1 0 7M852.500 743.500a9 9 0 0 1 0 13" fill="none" stroke="#31363b" stroke-width="1.200"/>
<path d="M867.500 753l6.200-6l6.200 6z" fill="#31363b"/>
<path d="M1001 745.500h12M1001 750h12M1001 754.500h12" stroke="#8a8d90" stroke-width="2"/>
</svg>
</div>
</body>
</html>
